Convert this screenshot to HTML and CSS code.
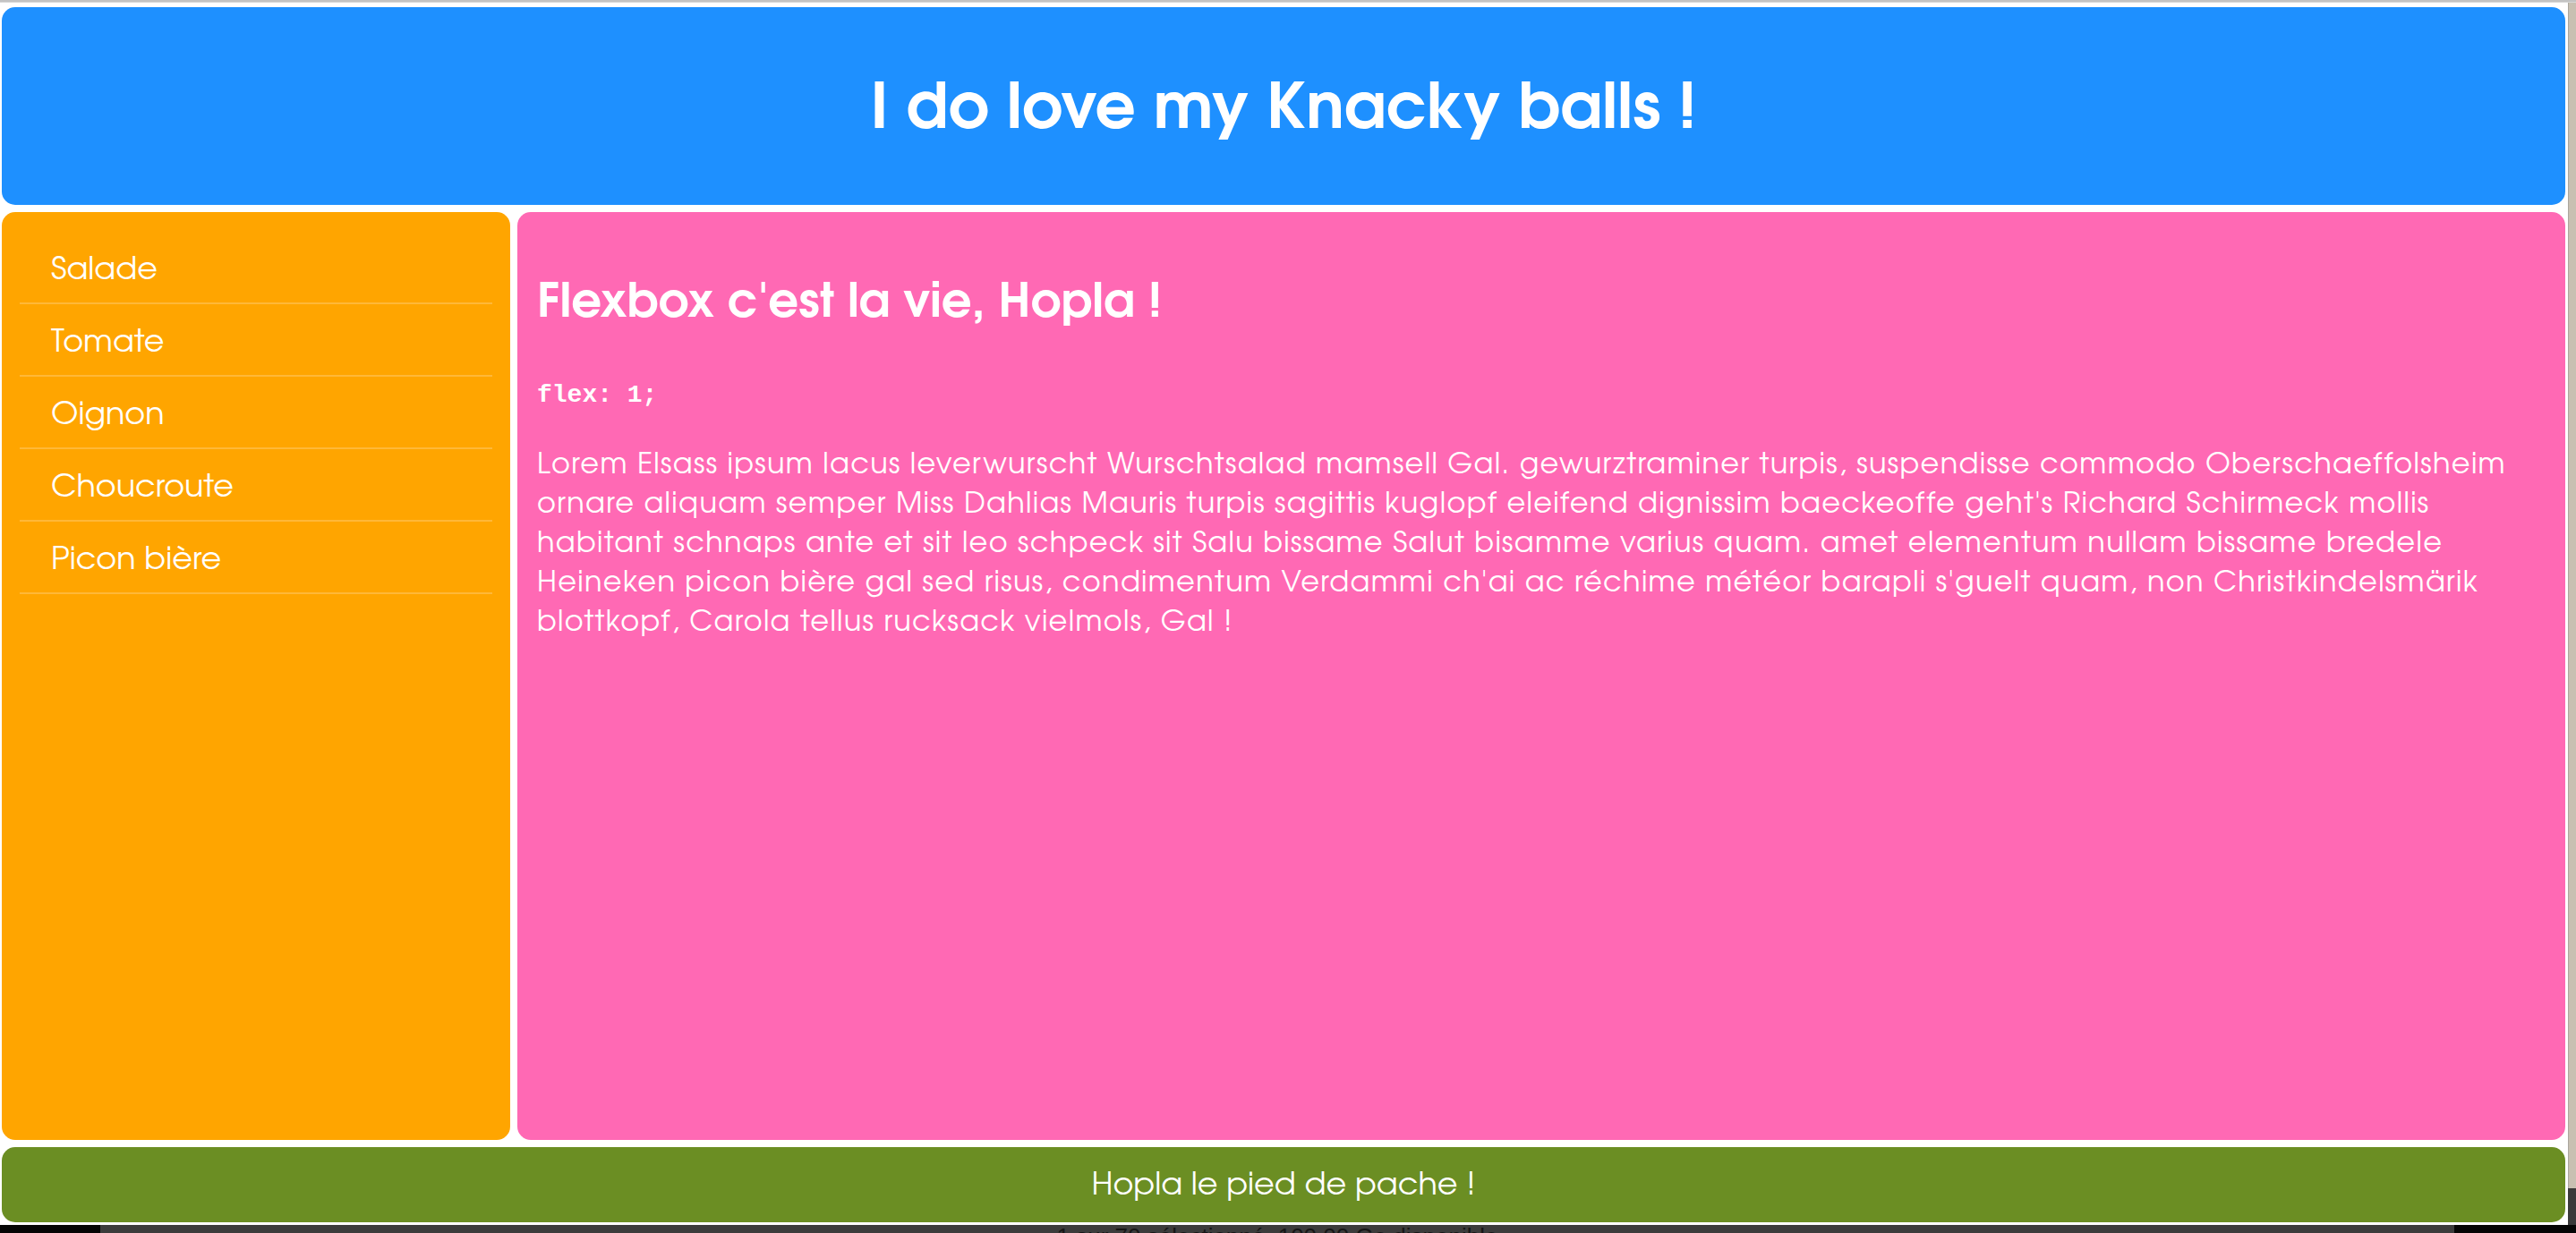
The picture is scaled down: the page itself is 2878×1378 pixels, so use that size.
FILE: index.html
```html
<!DOCTYPE html>
<html lang="fr">
<head>
<meta charset="utf-8">
<title>Knacky balls</title>
<link rel="stylesheet" href="styles.css">
</head>
<body>
<div class="screen">
  <div class="topline"></div>
  <div class="viewport">
    <div class="page">
      <header class="header"><h1 class="title">I do love my Knacky balls !</h1></header>
      <div class="middle">
        <nav class="sidebar">
          <ul class="menu">
            <li class="menu-item">Salade</li>
            <li class="menu-item">Tomate</li>
            <li class="menu-item">Oignon</li>
            <li class="menu-item">Choucroute</li>
            <li class="menu-item">Picon bière</li>
          </ul>
        </nav>
        <main class="main">
          <h2 class="subtitle">Flexbox c'est la vie, Hopla !</h2>
          <p class="code-line"><code class="code">flex: 1;</code></p>
          <p class="lorem">Lorem Elsass ipsum lacus leverwurscht Wurschtsalad mamsell Gal. gewurztraminer turpis, suspendisse commodo Oberschaeffolsheim<br>ornare aliquam semper Miss Dahlias Mauris turpis sagittis kuglopf eleifend dignissim baeckeoffe geht's Richard Schirmeck mollis<br>habitant schnaps ante et sit leo schpeck sit Salu bissame Salut bisamme varius quam. amet elementum nullam bissame bredele<br>Heineken picon bière gal sed risus, condimentum Verdammi ch'ai ac réchime météor barapli s'guelt quam, non Christkindelsmärik<br>blottkopf, Carola tellus rucksack vielmols, Gal !</p>
        </main>
      </div>
      <footer class="footer">Hopla le pied de pache !</footer>
    </div>
    <div class="side-strip">
      <div class="strip-top"></div>
      <div class="strip-bottom"></div>
    </div>
  </div>
  <div class="taskbar">
    <div class="status">1 sur 70 sélectionné, 100,00 Go disponible</div>
  </div>
</div>
</body>
</html>
```
FILE: styles.css
```css
html, body {
  margin: 0;
  padding: 0;
  background: #ffffff;
  overflow: hidden;
}

.screen {
  width: 2878px;
  height: 1378px;
  display: flex;
  flex-direction: column;
}

.topline {
  flex: none;
  height: 3px;
  background: #c3c3c3;
  border-bottom: 1px solid #d8d8d8;
  box-sizing: border-box;
}

.viewport {
  flex: 1;
  min-height: 0;
  display: flex;
}

.page {
  flex: 1;
  min-width: 0;
  display: flex;
  flex-direction: column;
  gap: 8px;
  padding: 5px 3px 3px 2px;
  background: #ffffff;
  font-family: "URW Gothic", "URW Gothic L", "TeX Gyre Adventor", "DejaVu Sans", sans-serif;
  color: #ffffff;
}

.header {
  flex: none;
  height: 211px;
  padding-top: 10px;
  background: #1e90ff;
  border-radius: 15px;
  display: flex;
  align-items: center;
  justify-content: center;
}

.title {
  margin: 0;
  font-family: "URW Gothic", "URW Gothic L", "TeX Gyre Adventor", "Liberation Sans", sans-serif;
  font-weight: bold;
  font-size: 71px;
  line-height: 1;
}

.middle {
  flex: 1;
  min-height: 0;
  display: flex;
  gap: 8px;
}

.sidebar {
  flex: none;
  width: 568px;
  box-sizing: border-box;
  padding: 22px 20px;
  background: #ffa500;
  border-radius: 15px;
}

.menu {
  list-style: none;
  margin: 0;
  padding: 0;
}

.menu-item {
  height: 72px;
  padding-top: 7px;
  border-bottom: 2px solid rgba(255, 255, 255, 0.22);
  padding-left: 35px;
  display: flex;
  align-items: center;
  font-size: 35px;
}

.main {
  flex: 1;
  min-width: 0;
  padding: 0 22px;
  background: #ff69b4;
  border-radius: 15px;
}

.subtitle {
  margin: 71px 0 0;
  font-family: "URW Gothic", "URW Gothic L", "TeX Gyre Adventor", "Liberation Sans", sans-serif;
  font-weight: bold;
  font-size: 53px;
  line-height: 64px;
}

.code-line {
  margin: 54px 0 0;
  line-height: 32px;
}

.code {
  font-family: "Nimbus Mono PS", "Nimbus Mono L", "Courier", "Liberation Mono", monospace;
  font-weight: bold;
  font-size: 28px;
}

.lorem {
  margin: 37px 0 0;
  font-size: 32px;
  line-height: 44px;
  letter-spacing: 1.3px;
  white-space: nowrap;
}

.footer {
  flex: none;
  height: 81px;
  padding-top: 3px;
  background: #6b8e23;
  border-radius: 15px;
  display: flex;
  align-items: center;
  justify-content: center;
  font-size: 35px;
}

.side-strip {
  flex: none;
  width: 9px;
  display: flex;
  flex-direction: column;
}

.strip-top {
  height: 1325px;
  background: #c8c0b2;
  border-left: 1px solid #aaa69e;
}

.strip-bottom {
  flex: 1;
  background: #3a3a3a;
}

.taskbar {
  flex: none;
  height: 9px;
  background: #050505;
  padding: 0 136px 0 112px;
  display: flex;
}

.status {
  flex: 1;
  overflow: hidden;
  background: #3c3c3c;
  color: #161616;
  font-family: "Liberation Sans", sans-serif;
  font-size: 26px;
  line-height: 26px;
  text-align: center;
}
```
